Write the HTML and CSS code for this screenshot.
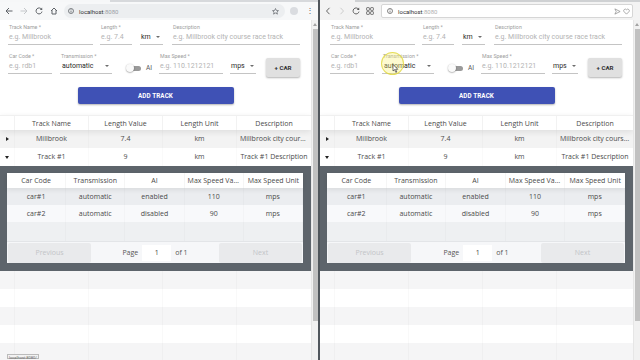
FILE: index.html
```html
<!DOCTYPE html>
<html>
<head>
<meta charset="utf-8">
<link rel="stylesheet" href="styles.css">
</head>
<body>
<div class="screen">
  <section class="win win-left">
    <div class="tabstrip"><span class="tabgap"></span></div>
    <div class="toolbar chrome">
      <span class="tb-ic"><svg width="8" height="8" viewBox="0 0 8 8"><path d="M7.5 4H1M4 1L1 4l3 3" fill="none" stroke="#5f6368" stroke-width="1"/></svg></span>
      <span class="tb-ic"><svg width="8" height="8" viewBox="0 0 8 8"><path d="M0.5 4H7M4 1l3 3-3 3" fill="none" stroke="#c4c7ca" stroke-width="1"/></svg></span>
      <span class="tb-ic"><svg width="8" height="8" viewBox="0 0 8 8"><path d="M6.6 2.3A3 3 0 1 0 7 4.6" fill="none" stroke="#5f6368" stroke-width="1"/><path d="M7.2 0.6V3H4.8z" fill="#5f6368"/></svg></span>
      <span class="tb-ic"><svg width="8" height="8" viewBox="0 0 8 8"><path d="M1 4L4 1l3 3M2 3.2V7h4V3.2" fill="none" stroke="#5f6368" stroke-width="1"/></svg></span>
      <div class="omni">
        <svg class="info" width="6" height="6" viewBox="0 0 6 6"><circle cx="3" cy="3" r="2.5" fill="none" stroke="#5f6368" stroke-width="0.8"/><path d="M3 2.6V4.5M3 1.4v0.6" stroke="#5f6368" stroke-width="0.8"/></svg>
        <span class="host">localhost</span><span class="port">:8080</span>
        <svg class="star" width="7" height="7" viewBox="0 0 8 8"><path d="M4 0.6l1 2.2 2.4.2-1.8 1.6.6 2.4L4 5.7 1.8 7l.6-2.4L.6 3l2.4-.2z" fill="none" stroke="#5f6368" stroke-width="0.8"/></svg>
      </div>
      <span class="profile"></span>
      <span class="dots">⋮</span>
    </div>
    <div class="viewport">
      <main class="page">
        <div class="form">
          <div class="frow r1">
            <div class="field w-name"><span class="lbl">Track Name *</span><span class="inp ph">e.g. Millbrook</span></div>
            <div class="field w-len"><span class="lbl">Length *</span><span class="inp ph">e.g. 7.4</span></div>
            <div class="field w-km"><span class="lbl"></span><span class="inp sel"><span class="val">km</span><span class="caret"></span></span></div>
            <div class="field w-desc"><span class="lbl">Description</span><span class="inp ph">e.g. Millbrook city course race track</span></div>
          </div>
          <div class="frow r2">
            <div class="field w-code"><span class="lbl">Car Code *</span><span class="inp ph">e.g. rdb1</span></div>
            <div class="field w-trans"><span class="lbl">Transmission *</span><span class="inp sel"><span class="val">automatic</span><span class="caret"></span></span></div>
            <div class="sw-group"><span class="switch"><span class="knob"></span></span><span class="ai">AI</span></div>
            <div class="field w-speed"><span class="lbl">Max Speed *</span><span class="inp ph">e.g. 110.1212121</span></div>
            <div class="field w-mps"><span class="lbl"></span><span class="inp sel"><span class="val">mps</span><span class="caret"></span></span></div>
            <button class="btn-car">+ CAR</button>
          </div>
          <div class="add-wrap"><button class="btn-add">ADD TRACK</button></div>
        </div>
        <div class="rt">
          <div class="rt-head">
            <span class="c"></span><span class="c">Track Name</span><span class="c">Length Value</span><span class="c">Length Unit</span><span class="c">Description</span>
          </div>
          <div class="rt-row odd">
            <span class="c exp"><span class="tri-r"></span></span><span class="c">Millbrook</span><span class="c">7.4</span><span class="c">km</span><span class="c">Millbrook city course race track</span>
          </div>
          <div class="rt-row">
            <span class="c exp"><span class="tri-d"></span></span><span class="c">Track #1</span><span class="c">9</span><span class="c">km</span><span class="c">Track #1 Description</span>
          </div>
          <div class="sub">
            <div class="st">
              <div class="st-head"><span class="c">Car Code</span><span class="c">Transmission</span><span class="c">AI</span><span class="c">Max Speed Value</span><span class="c">Max Speed Unit</span></div>
              <div class="st-row odd"><span class="c">car#1</span><span class="c">automatic</span><span class="c">enabled</span><span class="c">110</span><span class="c">mps</span></div>
              <div class="st-row"><span class="c">car#2</span><span class="c">automatic</span><span class="c">disabled</span><span class="c">90</span><span class="c">mps</span></div>
              <div class="st-row pad odd"><span class="c"></span><span class="c"></span><span class="c"></span><span class="c"></span><span class="c"></span></div>
              <div class="pager">
                <span class="pbtn">Previous</span>
                <span class="pinfo">Page <span class="pinput">1</span> of 1</span>
                <span class="pbtn">Next</span>
              </div>
            </div>
          </div>
          <div class="rt-row odd padrow"><span class="c"></span><span class="c"></span><span class="c"></span><span class="c"></span><span class="c"></span></div>
          <div class="rt-row padrow"><span class="c"></span><span class="c"></span><span class="c"></span><span class="c"></span><span class="c"></span></div>
          <div class="rt-row odd padrow"><span class="c"></span><span class="c"></span><span class="c"></span><span class="c"></span><span class="c"></span></div>
          <div class="rt-row padrow"><span class="c"></span><span class="c"></span><span class="c"></span><span class="c"></span><span class="c"></span></div>
          <div class="rt-row odd padrow"><span class="c"></span><span class="c"></span><span class="c"></span><span class="c"></span><span class="c"></span></div>
        </div>
      </main>
      <div class="scrollbar"><span class="sb-up"></span><span class="sb-thumb"></span></div>
    </div>
    <div class="status">localhost:8080/</div>
  </section>

  <div class="divider"></div>

  <section class="win win-right">
    <div class="tabstrip r"><span class="tabgap"></span></div>
    <div class="toolbar opera">
      <span class="tb-ic2"><svg width="6" height="8" viewBox="0 0 6 8"><path d="M4.5 0.8L1.5 4l3 3.2" fill="none" stroke="#555" stroke-width="0.9"/></svg></span>
      <span class="tb-ic2"><svg width="6" height="8" viewBox="0 0 6 8"><path d="M1.5 0.8L4.5 4l-3 3.2" fill="none" stroke="#c8c8c8" stroke-width="0.9"/></svg></span>
      <span class="tb-ic2"><svg width="8" height="8" viewBox="0 0 8 8"><path d="M6.6 2.3A3 3 0 1 0 7 4.6" fill="none" stroke="#555" stroke-width="0.9"/><path d="M7.2 0.6V3H4.8z" fill="#555"/></svg></span>
      <span class="tb-ic2"><svg width="8" height="8" viewBox="0 0 8 8"><g fill="none" stroke="#555" stroke-width="0.8"><rect x="0.6" y="0.6" width="2.8" height="2.8" rx="0.6"/><rect x="4.6" y="0.6" width="2.8" height="2.8" rx="0.6"/><rect x="0.6" y="4.6" width="2.8" height="2.8" rx="0.6"/><rect x="4.6" y="4.6" width="2.8" height="2.8" rx="0.6"/></g></svg></span>
      <div class="addr">
        <svg class="info" width="6" height="6" viewBox="0 0 6 6"><circle cx="3" cy="3" r="2.5" fill="none" stroke="#666" stroke-width="0.8"/><path d="M3 2.6V4.5M3 1.4v0.6" stroke="#666" stroke-width="0.8"/></svg>
        <span class="host">localhost</span><span class="port">:8080</span>
        <svg class="send" width="7" height="7" viewBox="0 0 8 8"><path d="M1 1l6 3-6 3 1.5-3z" fill="none" stroke="#888" stroke-width="0.8"/></svg>
        <svg class="heart" width="7" height="7" viewBox="0 0 8 8"><path d="M4 7L1.2 4.2A1.7 1.7 0 0 1 4 2a1.7 1.7 0 0 1 2.8 2.2z" fill="none" stroke="#888" stroke-width="0.8"/></svg>
      </div>
    </div>
    <div class="viewport">
      <main class="page">
        <div class="form">
          <div class="frow r1">
            <div class="field w-name"><span class="lbl">Track Name *</span><span class="inp ph">e.g. Millbrook</span></div>
            <div class="field w-len"><span class="lbl">Length *</span><span class="inp ph">e.g. 7.4</span></div>
            <div class="field w-km"><span class="lbl"></span><span class="inp sel"><span class="val">km</span><span class="caret"></span></span></div>
            <div class="field w-desc"><span class="lbl">Description</span><span class="inp ph">e.g. Millbrook city course race track</span></div>
          </div>
          <div class="frow r2">
            <div class="field w-code"><span class="lbl">Car Code *</span><span class="inp ph">e.g. rdb1</span></div>
            <div class="field w-trans"><span class="lbl">Transmission *</span><span class="inp sel"><span class="val">automatic</span><span class="caret"></span></span></div>
            <div class="sw-group"><span class="switch"><span class="knob"></span></span><span class="ai">AI</span></div>
            <div class="field w-speed"><span class="lbl">Max Speed *</span><span class="inp ph">e.g. 110.1212121</span></div>
            <div class="field w-mps"><span class="lbl"></span><span class="inp sel"><span class="val">mps</span><span class="caret"></span></span></div>
            <button class="btn-car">+ CAR</button>
          </div>
          <div class="add-wrap"><button class="btn-add">ADD TRACK</button></div>
        </div>
        <div class="rt">
          <div class="rt-head">
            <span class="c"></span><span class="c">Track Name</span><span class="c">Length Value</span><span class="c">Length Unit</span><span class="c">Description</span>
          </div>
          <div class="rt-row odd">
            <span class="c exp"><span class="tri-r"></span></span><span class="c">Millbrook</span><span class="c">7.4</span><span class="c">km</span><span class="c">Millbrook city course race track</span>
          </div>
          <div class="rt-row">
            <span class="c exp"><span class="tri-d"></span></span><span class="c">Track #1</span><span class="c">9</span><span class="c">km</span><span class="c">Track #1 Description</span>
          </div>
          <div class="sub">
            <div class="st">
              <div class="st-head"><span class="c">Car Code</span><span class="c">Transmission</span><span class="c">AI</span><span class="c">Max Speed Value</span><span class="c">Max Speed Unit</span></div>
              <div class="st-row odd"><span class="c">car#1</span><span class="c">automatic</span><span class="c">enabled</span><span class="c">110</span><span class="c">mps</span></div>
              <div class="st-row"><span class="c">car#2</span><span class="c">automatic</span><span class="c">disabled</span><span class="c">90</span><span class="c">mps</span></div>
              <div class="st-row pad odd"><span class="c"></span><span class="c"></span><span class="c"></span><span class="c"></span><span class="c"></span></div>
              <div class="pager">
                <span class="pbtn">Previous</span>
                <span class="pinfo">Page <span class="pinput">1</span> of 1</span>
                <span class="pbtn">Next</span>
              </div>
            </div>
          </div>
          <div class="rt-row odd padrow"><span class="c"></span><span class="c"></span><span class="c"></span><span class="c"></span><span class="c"></span></div>
          <div class="rt-row padrow"><span class="c"></span><span class="c"></span><span class="c"></span><span class="c"></span><span class="c"></span></div>
          <div class="rt-row odd padrow"><span class="c"></span><span class="c"></span><span class="c"></span><span class="c"></span><span class="c"></span></div>
          <div class="rt-row padrow"><span class="c"></span><span class="c"></span><span class="c"></span><span class="c"></span><span class="c"></span></div>
          <div class="rt-row odd padrow"><span class="c"></span><span class="c"></span><span class="c"></span><span class="c"></span><span class="c"></span></div>
        </div>
      </main>
      <div class="scrollbar"><span class="sb-up"></span><span class="sb-thumb"></span></div>
    </div>
    <div class="cursor-ring"></div>
    <svg class="cursor" width="7" height="9" viewBox="0 0 7 9"><path d="M1 0.5v6.5l1.6-1.4 1.2 2.8 1-.4-1.2-2.7H5.8z" fill="#fff" stroke="#222" stroke-width="0.6"/></svg>
  </section>
</div>
</body>
</html>
```

FILE: styles.css
```css
* { box-sizing: border-box; margin: 0; padding: 0; }
html, body { width: 640px; height: 360px; overflow: hidden; background: #fff; }
body { font-family: Roboto, "Liberation Sans", sans-serif; color: #333; }

.screen { display: flex; width: 640px; height: 360px; }
.win { position: relative; display: flex; flex-direction: column; height: 360px; overflow: hidden; background: #fff; }
.win-left { width: 318px; }
.win-right { width: 320px; }
.divider { width: 2px; background: #50565c; }

/* tab strip remnant */
.tabstrip { height: 2px; display: flex; background: #f6f7f8; }
.tabstrip .tabgap { margin-left: 110px; flex: 1; background: #d7d9dc; }
.tabstrip.r { background: #f3f3f3; }
.tabstrip.r .tabgap { margin-left: 35px; background: #cfd1d3; }

/* toolbars */
.toolbar { height: 18px; flex: none; display: flex; align-items: center; }
.chrome { background: #f7f8f9; padding-left: 1px; }
.tb-ic { width: 15px; height: 14px; display: flex; align-items: center; justify-content: center; }
.omni { margin-left: 3px; width: 221px; height: 14px; border-radius: 7px; background: #eceef0; display: flex; align-items: center; padding-left: 4px; font-size: 6px; }
.omni .info, .addr .info { margin-right: 5px; }
.host { color: #303134; }
.port { color: #9aa0a6; }
.omni .star { margin-left: auto; margin-right: 6px; }
.profile { width: 8px; height: 8px; border-radius: 50%; background: #dadce0; margin-left: 5px; }
.dots { margin-left: 8px; font-size: 8px; color: #5f6368; line-height: 1; }

.opera { background: #f3f3f3; padding-left: 1px; }
.tb-ic2 { width: 14px; height: 14px; display: flex; align-items: center; justify-content: center; }
.addr { margin-left: 4px; width: 252px; height: 14px; background: #fff; border: 1px solid #d6d6d6; border-radius: 2px; display: flex; align-items: center; padding-left: 5px; font-size: 6px; }
.addr .port { color: #b0b0b0; }
.addr .send { margin-left: auto; margin-right: 2px; }
.addr .heart { margin-right: 2px; }

/* viewport */
.viewport { flex: 1; display: flex; min-height: 0; }
.page { flex: 1; min-width: 0; overflow: hidden; }
.scrollbar { width: 7px; flex: none; background: #f1f1f1; border-left: 1px solid #e6e6e6; display: flex; flex-direction: column; align-items: center; }
.sb-up { width: 0; height: 0; margin-top: 3px; border-left: 2px solid transparent; border-right: 2px solid transparent; border-bottom: 3px solid #a3a3a3; }
.sb-thumb { width: 5px; height: 292px; margin-top: 3px; background: #c1c1c1; }

/* form */
.form { padding: 4px 0 0 8px; }
.win-right .form { padding-left: 10px; }
.frow { display: flex; align-items: flex-start; }
.r2 { margin-top: 8px; }
.field { display: flex; flex-direction: column; }
.lbl { height: 6px; font-size: 5.3px; line-height: 6px; color: #9e9e9e; white-space: nowrap; padding-left: 1px; }
.inp { height: 15px; display: flex; align-items: center; border-bottom: 1px solid #c4c4c4; font-size: 7px; white-space: nowrap; overflow: hidden; padding-left: 1px; }
.ph { color: #b3b3b3; }
.sel .val { color: #2a2a2a; }
.caret { margin-left: auto; margin-right: 3px; width: 0; height: 0; border-left: 2px solid transparent; border-right: 2px solid transparent; border-top: 2.5px solid #6d6d6d; }

.w-name { width: 85px; }
.w-len { width: 32px; margin-left: 7px; }
.w-km { width: 23px; margin-left: 8px; }
.w-desc { width: 128px; margin-left: 9px; }
.w-code { width: 44px; }
.w-trans { width: 52px; margin-left: 8px; }
.w-trans .val { padding-left: 1px; }
.sw-group { display: flex; align-items: center; margin-left: 15px; margin-top: 10px; height: 10px; }
.switch { position: relative; width: 14px; height: 5px; border-radius: 3px; background: #9a9a9a; }
.knob { position: absolute; left: -1px; top: -1.5px; width: 8px; height: 8px; border-radius: 50%; background: #fafafa; box-shadow: 0 0.5px 1.5px rgba(0,0,0,0.45); }
.ai { font-size: 6.5px; color: #555; margin-left: 5px; }
.w-speed { width: 64px; margin-left: 7px; }
.w-mps { width: 26px; margin-left: 7px; }
.w-mps .caret { margin-right: 2px; }
.btn-car { margin-left: 10px; margin-top: 5px; width: 34px; height: 19px; border: none; border-radius: 2px; background: #e0e0e0; box-shadow: 0 1px 2px rgba(0,0,0,0.3); font-family: Roboto, sans-serif; font-size: 6.2px; font-weight: 700; color: #2f2f2f; }

.add-wrap { display: flex; justify-content: center; margin-top: 10px; padding-right: 8px; }
.win-right .add-wrap { padding-right: 10px; }
.btn-add { width: 156px; height: 17px; border: none; border-radius: 2px; background: #3f51b5; box-shadow: 0 1px 2px rgba(0,0,0,0.3); color: #fff; font-family: Roboto, sans-serif; font-size: 6.3px; font-weight: 700; letter-spacing: 0.1px; }

/* main table */
.rt { margin-top: 11px; font-family: "Open Sans", "Noto Sans", sans-serif; font-size: 7px; color: #4a4a4a; }
.rt-head, .rt-row { display: grid; grid-template-columns: 15px 74px 74px 74px 1fr; }
.rt-head { height: 15px; align-items: center; border-top: 1px solid #f0f0f0; box-shadow: 0 2px 6px rgba(0,0,0,0.09); position: relative; z-index: 1; background: #fff; }
.rt-head .c { border-right: 1px solid rgba(0,0,0,0.05); height: 100%; display: flex; align-items: center; justify-content: center; }
.rt-row { height: 18px; background: #fff; }
.rt-row.odd { background: #f3f3f3; }
.c { min-width: 0; white-space: nowrap; overflow: hidden; text-overflow: ellipsis; text-align: center; padding: 0 3px; }
.rt-row .c { line-height: 18px; border-right: 1px solid rgba(0,0,0,0.02); }
.rt-row .c:last-child, .rt-head .c:last-child { border-right: none; }
.exp { display: flex; align-items: center; justify-content: center; }
.tri-r { width: 0; height: 0; border-top: 2px solid transparent; border-bottom: 2px solid transparent; border-left: 3px solid #222; }
.tri-d { width: 0; height: 0; border-left: 2px solid transparent; border-right: 2px solid transparent; border-top: 3px solid #222; }

.sub { background: #5d646b; padding: 7px 8px 8px 7px; }
.st { background: #f6f7f9; }
.st-head, .st-row { display: grid; grid-template-columns: repeat(5, 1fr); }
.st-head { height: 15px; line-height: 15px; background: #fff; box-shadow: 0 2px 5px rgba(0,0,0,0.08); position: relative; }
.st-head .c { border-right: 1px solid rgba(0,0,0,0.04); padding: 0 3px; }
.st-head .c:last-child { border-right: none; }
.st-row { height: 17px; line-height: 17px; background: #f8f9fb; }
.st-row.odd { background: #ebedf0; }
.st-row.pad { height: 19px; }
.st-row.pad.odd { background: #eef0f2; }
.st-row .c { border-right: 1px solid rgba(0,0,0,0.02); }
.pager { height: 22px; display: flex; align-items: center; padding: 0 1px; background: #f6f7f9; border-top: 1px solid #e3e5e8; }
.pbtn { width: 83px; height: 20px; display: flex; align-items: center; justify-content: center; background: #e9eaec; color: #c2c4c7; border-radius: 2px; }
.pinfo { flex: 1; display: flex; align-items: center; justify-content: center; color: #555; }
.pinput { width: 29px; height: 16px; margin: 0 4px; background: #fff; display: flex; align-items: center; justify-content: center; color: #444; }

.padrow .c { border-right: 1px solid rgba(0,0,0,0.025); }
.rt-row.padrow { height: 18px; }
.rt-row.padrow.odd { background: #f5f5f6; }

/* overlays */
.status { position: absolute; left: 7px; bottom: 1px; height: 5px; padding: 0 1px; font-size: 4px; line-height: 5px; color: #666; background: #f2f2f2; border: 0.5px solid #bbb; }
.cursor-ring { position: absolute; left: 61px; top: 52px; width: 23px; height: 23px; border-radius: 50%; background: rgba(250, 240, 120, 0.35); border: 1.5px solid rgba(225, 215, 60, 0.8); }
.cursor { position: absolute; left: 72px; top: 64px; }
```
